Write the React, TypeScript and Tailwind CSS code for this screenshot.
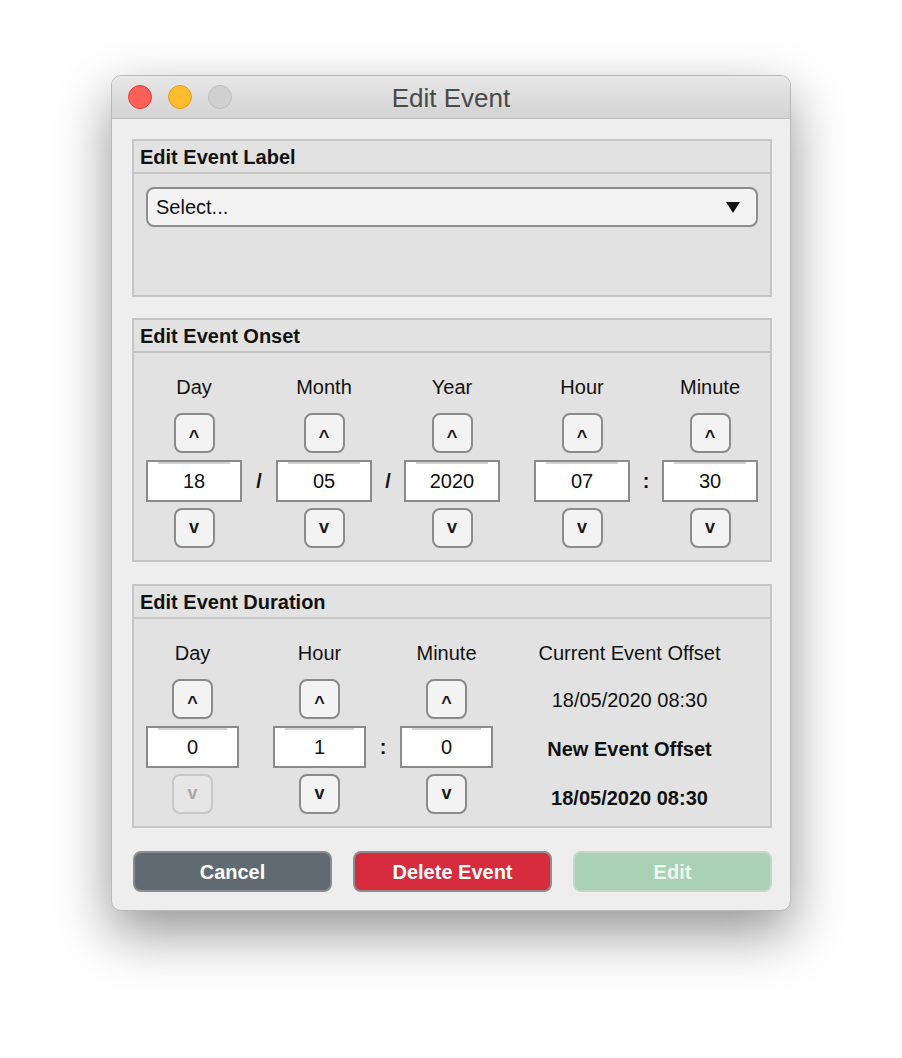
import React, { useState } from 'react';

const FONT = "font-['Liberation_Sans','Helvetica',Arial,sans-serif]";

interface PanelProps {
  title: string;
  children: React.ReactNode;
  bodyClass: string;
}

const Panel: React.FC<PanelProps> = ({ title, children, bodyClass }) => (
  <div className="border-2 border-[#c6c6c6] bg-[#e2e2e2]">
    <div className="flex h-[33px] items-center border-b-2 border-[#c6c6c6] pl-[6px] text-[20px] font-bold text-[#111]">
      {title}
    </div>
    <div className={bodyClass}>{children}</div>
  </div>
);

const SpinButton: React.FC<{ dir: 'up' | 'down'; disabled?: boolean; onClick?: () => void }> = ({ dir, disabled, onClick }) => (
  <button
    onClick={onClick}
    disabled={disabled}
    className={`flex h-[40px] w-[41px] items-center justify-center rounded-[8px] border-2 text-[18px] font-bold leading-none
      ${disabled ? 'border-[#c9c9c9] bg-[#e6e6e6] text-[#a8a8a8]' : 'border-[#8b8b8b] bg-[#f3f3f3] text-[#1a1a1a]'}
      ${dir === 'up' ? 'pt-[8px]' : 'pb-[2px]'}`}
  >
    {dir === 'up' ? '^' : 'v'}
  </button>
);

interface SpinFieldProps {
  label: string;
  value: string;
  width: string;
  downDisabled?: boolean;
}

const SpinField: React.FC<SpinFieldProps> = ({ label, value, width, downDisabled }) => (
  <div className={`flex flex-col items-center ${width}`}>
    <div className="h-[20px] text-[20px] leading-[20px] text-[#111]">{label}</div>
    <div className="mt-[16px]">
      <SpinButton dir="up" />
    </div>
    <div className="relative mt-[7px] flex h-[42px] w-full items-center justify-center border-2 border-[#8b8b8b] bg-white text-[20px] text-[#111]">
      <span className="absolute left-[10px] right-[10px] top-0 h-[2px] bg-[#d4d4d4]" />
      {value}
    </div>
    <div className="mt-[6px]">
      <SpinButton dir="down" disabled={downDisabled} />
    </div>
  </div>
);

const Sep: React.FC<{ ch?: string; width: string }> = ({ ch, width }) => (
  <div className={`flex flex-col items-center ${width}`}>
    {ch && <div className="mt-[83px] flex h-[42px] items-center text-[20px] font-bold text-[#111]">{ch}</div>}
  </div>
);

const ActionButton: React.FC<{ label: string; tone: 'cancel' | 'delete' | 'edit' }> = ({ label, tone }) => {
  const tones = {
    cancel: 'bg-[#5f6a72] border-[#8a8e91] text-white',
    delete: 'bg-[#d62c3d] border-[#8e8e8e] text-white',
    edit: 'bg-[#a9d1b4] border-[#c6d6ca] text-[#eef6f0]',
  };
  return (
    <button className={`h-[41px] w-[199px] rounded-[8px] border-2 text-[20px] font-bold ${tones[tone]}`}>{label}</button>
  );
};

export default function App() {
  const [label] = useState('Select...');

  return (
    <div className={`min-h-[1058px] bg-white pl-[111px] pt-[75px] ${FONT}`}>
      <div className="w-[680px] overflow-hidden rounded-[10px] border border-[#b9b9b9] bg-[#eeeeee] shadow-[0_22px_55px_rgba(0,0,0,0.42)]">
        {/* Title bar */}
        <div className="flex h-[43px] items-center border-b border-[#bdbdbd] bg-gradient-to-b from-[#e8e8e8] to-[#d3d3d3] px-[16px]">
          <div className="flex w-[120px] items-center gap-[16px]">
            <span className="h-[24px] w-[24px] rounded-full border border-[#e0443e] bg-[#fe5f57]" />
            <span className="h-[24px] w-[24px] rounded-full border border-[#dea123] bg-[#febc2e]" />
            <span className="h-[24px] w-[24px] rounded-full border border-[#bdbdbd] bg-[#d0d0d0]" />
          </div>
          <div className="flex-1 pt-[2px] text-center text-[26px] text-[#4a4a4a]">Edit Event</div>
          <div className="w-[120px]" />
        </div>

        <div className="pb-[18px] pl-[20px] pr-[18px] pt-[20px]">
          <Panel title="Edit Event Label" bodyClass="px-[12px] pt-[13px] pb-[68px]">
            <div className="flex h-[40px] items-center justify-between rounded-[8px] border-2 border-[#8d8d8d] bg-[#f3f3f3] pl-[8px] pr-[16px] text-[20px] text-[#111]">
              <span>{label}</span>
              <svg width="14" height="11" viewBox="0 0 14 11">
                <polygon points="0,0 14,0 7,11" fill="#111" />
              </svg>
            </div>
          </Panel>

          <div className="mt-[21px]">
            <Panel title="Edit Event Onset" bodyClass="flex px-[12px] pt-[24px] pb-[12px]">
              <SpinField label="Day" value="18" width="w-[96px]" />
              <Sep ch="/" width="w-[34px]" />
              <SpinField label="Month" value="05" width="w-[96px]" />
              <Sep ch="/" width="w-[32px]" />
              <SpinField label="Year" value="2020" width="w-[96px]" />
              <Sep width="w-[34px]" />
              <SpinField label="Hour" value="07" width="w-[96px]" />
              <Sep ch=":" width="w-[32px]" />
              <SpinField label="Minute" value="30" width="w-[96px]" />
            </Panel>
          </div>

          <div className="mt-[22px]">
            <Panel title="Edit Event Duration" bodyClass="flex px-[12px] pt-[24px] pb-[12px]">
              <SpinField label="Day" value="0" width="w-[93px]" downDisabled />
              <Sep width="w-[34px]" />
              <SpinField label="Hour" value="1" width="w-[93px]" />
              <Sep ch=":" width="w-[34px]" />
              <SpinField label="Minute" value="0" width="w-[93px]" />
              <div className="flex flex-1 flex-col items-center pl-[8px] text-[20px] leading-[20px] text-[#111]">
                <div className="h-[20px]">Current Event Offset</div>
                <div className="mt-[27px] h-[20px]">18/05/2020 08:30</div>
                <div className="mt-[29px] h-[20px] font-bold">New Event Offset</div>
                <div className="mt-[29px] h-[20px] font-bold">18/05/2020 08:30</div>
              </div>
            </Panel>
          </div>

          <div className="mt-[23px] flex justify-between pl-[1px]">
            <ActionButton label="Cancel" tone="cancel" />
            <ActionButton label="Delete Event" tone="delete" />
            <ActionButton label="Edit" tone="edit" />
          </div>
        </div>
      </div>
    </div>
  );
}
